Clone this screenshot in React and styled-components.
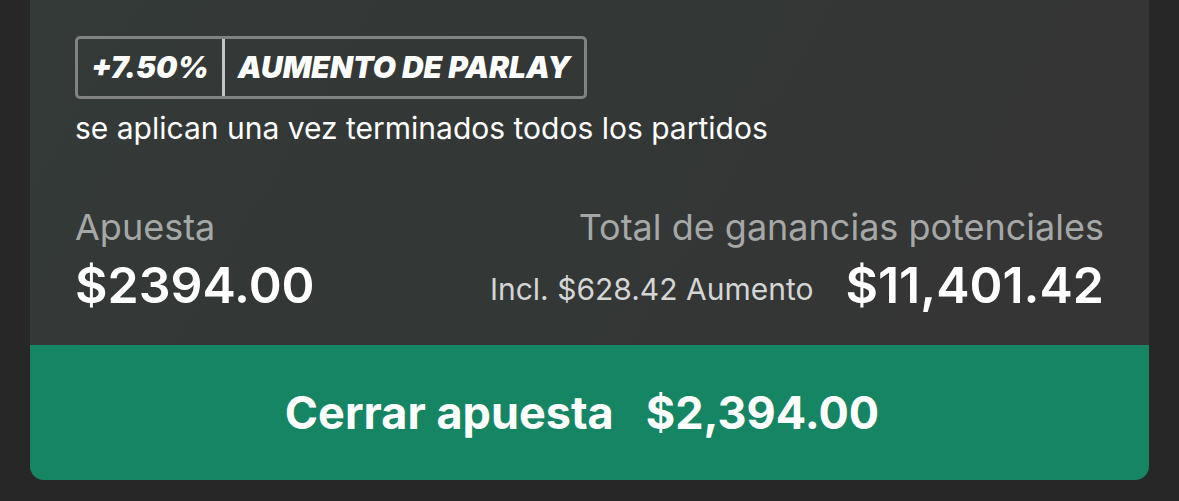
import React from "react";
import styled, { createGlobalStyle } from "styled-components";

const Global = createGlobalStyle`
  * { box-sizing: border-box; }
  body { margin: 0; background: #272727; font-family: Inter, "Liberation Sans", sans-serif; }
`;
const Page = styled.main`
  padding: 0 30px 21px;
`;
const Card = styled.section`
  overflow: hidden;
  border-radius: 0 0 14px 14px;
  background: linear-gradient(120deg, #343a38 0%, #333736 50%, #353535 80%);
`;
const Details = styled.div`
  padding: 36px 45px 32px;
`;
const Boost = styled.div`
  display: flex;
  width: fit-content;
  height: 63px;
  border: 3px solid #808381;
  border-radius: 5px;
  color: #fff;
  font: italic 900 30px/57px Inter, "Liberation Sans", sans-serif;
  white-space: nowrap;
`;
const BoostPart = styled.span`
  padding: 0 13px;
  & + & { border-left: 3px solid #c4c6c5; }
`;
const Note = styled.p`
  margin: 12px 0 0;
  color: #fff;
  font-size: 30px;
  line-height: 34px;
`;
const Totals = styled.dl`
  display: flex;
  justify-content: space-between;
  margin: 60px 0 0;
`;
const Total = styled.div`
  text-align: ${(p) => p.$align};
`;
const Label = styled.dt`
  color: #a6a8a7;
  font-size: 36px;
  line-height: 44px;
`;
const Value = styled.dd`
  display: flex;
  justify-content: ${(p) => (p.$align === "left" ? "flex-start" : "flex-end")};
  align-items: flex-end;
  gap: 32px;
  margin: 8px 0 0;
  color: #fff;
  font-size: 50px;
  font-weight: 600;
  line-height: 56px;
`;
const Included = styled.span`
  color: #d4d5d5;
  font-size: 30px;
  font-weight: 400;
  line-height: 48px;
`;
const CashOut = styled.button`
  display: flex;
  justify-content: center;
  align-items: center;
  gap: 32px;
  width: 100%;
  height: 135px;
  padding: 0 15px 0 0;
  border: 0;
  background: #168563;
  color: #fff;
  font: 700 45px/52px Inter, "Liberation Sans", sans-serif;
  cursor: pointer;
`;

export default function App() {
  return (
    <Page>
      <Global />
      <Card>
        <Details>
          <Boost>
            <BoostPart>+7.50%</BoostPart>
            <BoostPart>AUMENTO DE PARLAY</BoostPart>
          </Boost>
          <Note>se aplican una vez terminados todos los partidos</Note>
          <Totals>
            <Total $align="left">
              <Label>Apuesta</Label>
              <Value $align="left">$2394.00</Value>
            </Total>
            <Total $align="right">
              <Label>Total de ganancias potenciales</Label>
              <Value $align="right">
                <Included>Incl. $628.42 Aumento</Included>
                <span>$11,401.42</span>
              </Value>
            </Total>
          </Totals>
        </Details>
        <CashOut type="button">
          <span>Cerrar apuesta</span>
          <span>$2,394.00</span>
        </CashOut>
      </Card>
    </Page>
  );
}
